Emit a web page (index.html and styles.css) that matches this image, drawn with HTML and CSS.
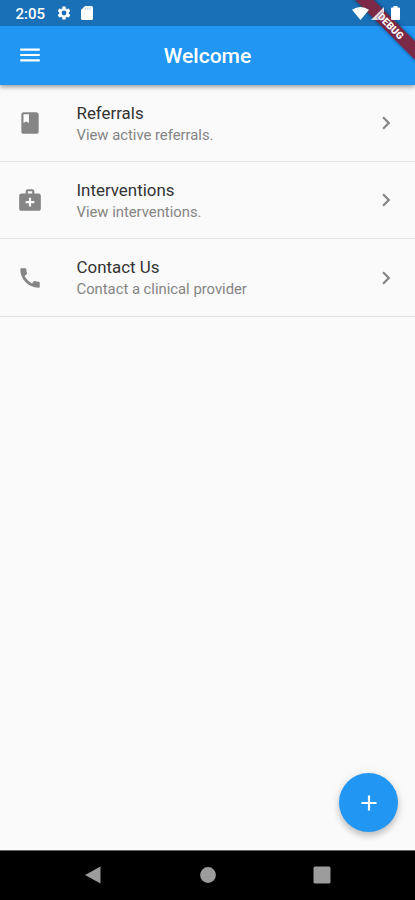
FILE: index.html
```html
<!DOCTYPE html>
<html lang="en">
<head>
<meta charset="utf-8">
<title>Welcome</title>
<link rel="stylesheet" href="styles.css">
</head>
<body>
<div class="screen">
  <header class="top">
    <div class="status">
      <span class="clock">2:05</span>
      <svg class="gear" viewBox="0 0 24 24"><path d="M19.14 12.94c.04-.3.06-.61.06-.94 0-.32-.02-.64-.07-.94l2.03-1.58a.49.49 0 0 0 .12-.61l-1.92-3.32a.49.49 0 0 0-.59-.22l-2.39.96c-.5-.38-1.03-.7-1.62-.94l-.36-2.54a.48.48 0 0 0-.48-.41h-3.84c-.24 0-.43.17-.47.41l-.36 2.54c-.59.24-1.13.57-1.62.94l-2.39-.96c-.22-.08-.47 0-.59.22L2.74 8.87c-.12.21-.08.47.12.61l2.03 1.58c-.05.3-.09.63-.09.94s.02.64.07.94l-2.03 1.58a.49.49 0 0 0-.12.61l1.92 3.32c.12.22.37.29.59.22l2.39-.96c.5.38 1.03.7 1.62.94l.36 2.54c.05.24.24.41.48.41h3.84c.24 0 .44-.17.47-.41l.36-2.54c.59-.24 1.13-.56 1.62-.94l2.39.96c.22.08.47 0 .59-.22l1.92-3.32a.49.49 0 0 0-.12-.61zM12 15.6a3.6 3.6 0 1 1 0-7.2 3.6 3.6 0 0 1 0 7.2z"/></svg>
      <svg class="card" viewBox="0 0 12 14"><path d="M4 0h6.500Q12 0 12 1.500v11q0 1.500-1.500 1.500h-9Q0 14 0 12.500V4z"/><path class="slots" d="M4.500 1.500v2.200M6.800 1.500v2.200M9.100 1.500v2.200"/></svg>
      <span class="signals">
        <svg class="wifi" viewBox="0 0 17 13"><path d="M0 2.800Q8.500-2.800 17 2.800L8.500 13z"/></svg>
        <svg class="cell" viewBox="0 0 13 13"><path d="M13 0v13H0z"/></svg>
        <svg class="battery" viewBox="0 0 9 14"><path d="M2.500 1.500V0h4v1.500H8q1 0 1 1V13q0 1-1 1H1q-1 0-1-1V2.500q0-1 1-1z"/></svg>
      </span>
    </div>
    <div class="appbar">
      <svg class="icon menu" viewBox="0 0 24 24"><path d="M3 18h18v-2H3v2zm0-5h18v-2H3v2zm0-7v2h18V6H3z"/></svg>
      <h1>Welcome</h1>
    </div>
    <div class="banner ribbon"></div>
    <div class="banner label">DEBUG</div>
  </header>
  <main>
    <div class="row">
      <svg class="icon" viewBox="0 0 24 24"><path d="M18 2H6c-1.100 0-2 .9-2 2v16c0 1.100.9 2 2 2h12c1.100 0 2-.9 2-2V4c0-1.100-.9-2-2-2zM6 4h5v8l-2.500-1.500L6 12V4z"/></svg>
      <div class="text"><div class="name">Referrals</div><div class="sub">View active referrals.</div></div>
      <svg class="icon" viewBox="0 0 24 24"><path d="M10 6 8.590 7.410 13.170 12l-4.580 4.590L10 18l6-6z"/></svg>
    </div>
    <div class="row">
      <svg class="icon" viewBox="0 0 24 24"><path d="M20 6h-4V4c0-1.100-.9-2-2-2h-4c-1.100 0-2 .9-2 2v2H4c-1.100 0-2 .9-2 2v12c0 1.100.9 2 2 2h16c1.100 0 2-.9 2-2V8c0-1.100-.9-2-2-2zM10 4h4v2h-4V4zm6 11h-3v3h-2v-3H8v-2h3v-3h2v3h3v2z"/></svg>
      <div class="text"><div class="name">Interventions</div><div class="sub">View interventions.</div></div>
      <svg class="icon" viewBox="0 0 24 24"><path d="M10 6 8.590 7.410 13.170 12l-4.580 4.590L10 18l6-6z"/></svg>
    </div>
    <div class="row">
      <svg class="icon" viewBox="0 0 24 24"><path d="M20.010 15.380c-1.230 0-2.420-.2-3.530-.56a.977.977 0 0 0-1.010.24l-1.570 1.970c-2.830-1.350-5.480-3.900-6.890-6.830l1.950-1.660c.27-.28.350-.67.240-1.020-.37-1.110-.56-2.300-.56-3.530 0-.54-.45-.99-.99-.99H4.190C3.650 3 3 3.240 3 3.990 3 13.280 10.730 21 20.010 21c.71 0 .99-.63.99-1.180v-3.450c0-.54-.45-.99-.99-.99z"/></svg>
      <div class="text"><div class="name">Contact Us</div><div class="sub">Contact a clinical provider</div></div>
      <svg class="icon" viewBox="0 0 24 24"><path d="M10 6 8.590 7.410 13.170 12l-4.580 4.590L10 18l6-6z"/></svg>
    </div>
  </main>
  <div class="fab"><svg class="icon" viewBox="0 0 24 24"><path d="M19 13h-6v6h-2v-6H5v-2h6V5h2v6h6v2z"/></svg></div>
  <nav>
    <svg viewBox="0 0 18 18"><path d="M16.500.500v17L1 9z"/></svg>
    <svg viewBox="0 0 18 18"><circle cx="9" cy="9" r="7.900"/></svg>
    <svg viewBox="0 0 18 18"><rect x=".5" y=".5" width="17" height="17" rx="1.500"/></svg>
  </nav>
</div>
</body>
</html>
```
FILE: styles.css
```css
* { box-sizing: border-box; }
body { margin: 0; font-family: Roboto, sans-serif; background: #fafafa; }
svg { display: block; flex: none; fill: currentColor; }
.screen { position: relative; width: 415px; height: 900px; display: flex; flex-direction: column; overflow: hidden; }
.top { position: relative; z-index: 1; height: 85px; color: #fff; background: #2196f3; box-shadow: 0 2px 4px rgba(0,0,0,.3), 0 1px 7px rgba(0,0,0,.12); }
.status { height: 26px; padding: 0 15px; display: flex; align-items: center; background: #1a70b6; }
.clock { width: 41px; font-size: 15px; line-height: 26px; font-weight: 500; padding: 2px 0 0 .5px; }
.gear { width: 16px; height: 16px; }
.card { width: 12px; height: 14px; margin-left: 9px; }
.slots { stroke: #8ebbe0; stroke-width: .8; }
.signals { position: relative; z-index: 2; margin-left: auto; display: flex; align-items: center; }
.wifi { width: 17px; height: 13px; }
.cell { width: 13px; height: 13px; margin-left: 2px; opacity: .85; }
.battery { width: 9px; height: 14px; margin: 0 0 0 7px; }
.appbar { height: 59px; display: grid; grid-template-columns: 56px 1fr 56px; align-items: center; padding-bottom: 1px; }
.menu { justify-self: end; margin-right: 13px; }
h1 { margin: 0; text-align: center; font-size: 21.100px; font-weight: 500; line-height: 28px; padding-top: 2px; }
.icon { width: 26px; height: 26px; }
.banner { position: absolute; left: 340px; top: 19px; width: 100px; height: 13px; transform: rotate(45deg); }
.ribbon { z-index: 1; background: #7b2947; box-shadow: 0 0 4px rgba(0,0,0,.5); }
.label { z-index: 3; padding-left: 2px; font-size: 10px; line-height: 13px; font-weight: 900; text-align: center; text-shadow: 0 0 1px #7b2947, 0 0 1px #7b2947, 0 0 2px #7b2947; }
main { flex: 1; }
.row { height: 77px; padding: 0 16px 0 17px; display: flex; align-items: center; border-bottom: 1px solid #e0e0e0; color: #858585; }
.row:last-child { height: 78px; }
.text { flex: 1; margin-left: 33.500px; padding-top: 2px; }
.row:last-child .text { padding-top: 1px; }
.name { font-size: 16.900px; line-height: 22px; color: #333; }
.sub { font-size: 14.800px; line-height: 22px; color: #848484; }
.fab { position: absolute; left: 339px; top: 773px; width: 59px; height: 59px; border-radius: 50%; display: grid; place-items: center; color: #fff; background: #2196f3; box-shadow: 0 4px 6px rgba(0,0,0,.2), 0 1px 12px rgba(0,0,0,.08); }
nav { height: 50px; padding: 0 84px; display: flex; justify-content: space-between; align-items: center; color: #9c9c9c; background: #000; border-top: 1px solid #666; padding-bottom: 1px; }
nav svg { width: 18px; height: 18px; }
```
